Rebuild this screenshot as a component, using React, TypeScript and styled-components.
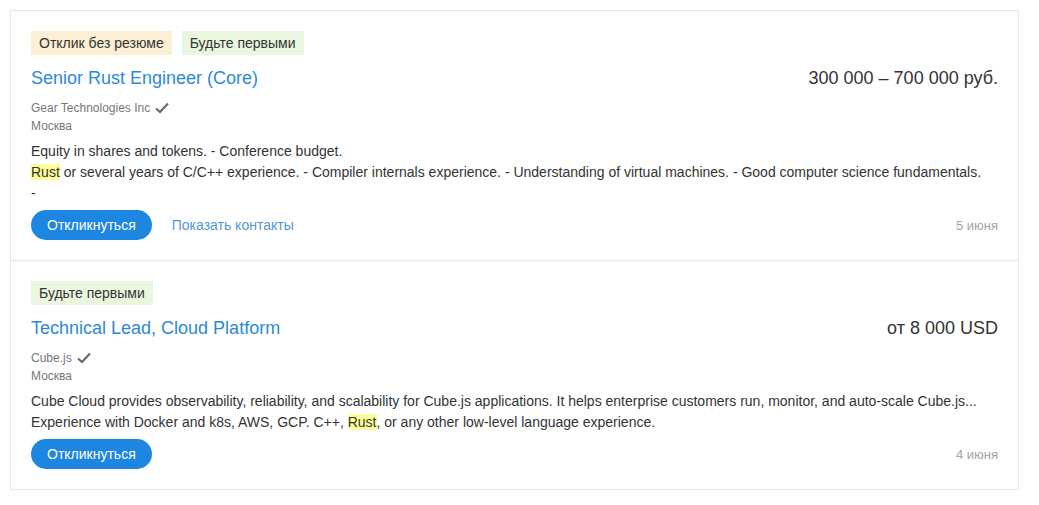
import styled, { createGlobalStyle } from 'styled-components';

const GlobalStyle = createGlobalStyle`
  body {
    margin: 0;
    background: #fff;
    font-family: 'Liberation Sans', Arial, sans-serif;
    color: #333;
  }
`;

const Page = styled.div`
  padding: 10px 20px 16px 10px;
`;

const List = styled.div`
  border: 1px solid #e6e6e6;
`;

const Card = styled.div`
  padding: 20px;
  & + & {
    border-top: 1px solid #e6e6e6;
  }
`;

const Tags = styled.div`
  display: flex;
  gap: 10px;
  margin-bottom: 11px;
`;

const Tag = styled.span<{ $tone: 'yellow' | 'green' }>`
  display: inline-block;
  height: 24px;
  line-height: 24px;
  padding: 0 8px;
  font-size: 14px;
  color: #333;
  background: ${(p) => (p.$tone === 'yellow' ? '#fbf0d4' : '#e9f7df')};
`;

const HeadRow = styled.div`
  display: flex;
  justify-content: space-between;
  align-items: center;
  height: 24px;
  margin-bottom: 9px;
`;

const Title = styled.a`
  font-size: 18px;
  color: #2b8ad8;
  text-decoration: none;
`;

const Salary = styled.div`
  font-size: 18px;
  color: #333;
`;

const Company = styled.div`
  display: flex;
  align-items: center;
  gap: 4px;
  font-size: 12px;
  line-height: 18px;
  color: #777;
`;

const City = styled.div`
  font-size: 12px;
  line-height: 18px;
  color: #777;
  margin-bottom: 6px;
`;

const Description = styled.div`
  font-size: 14px;
  line-height: 21px;
  color: #333;
  margin-bottom: 6px;
`;

const Mark = styled.mark`
  background: #ffff99;
  color: #333;
`;

const Footer = styled.div`
  display: flex;
  align-items: center;
  gap: 20px;
`;

const RespondButton = styled.button`
  height: 30px;
  padding: 0 16px;
  border: none;
  border-radius: 15px;
  background: #1d86e0;
  color: #fff;
  font-family: inherit;
  font-size: 14px;
  cursor: pointer;
`;

const ContactsLink = styled.a`
  font-size: 14px;
  color: #5398d3;
  text-decoration: none;
`;

const DateLabel = styled.span`
  margin-left: auto;
  font-size: 13px;
  color: #a3a3a3;
`;

const Check = () => (
  <svg width="16" height="14" viewBox="0 0 16 14" fill="none">
    <path d="M2 7.5 L6 11 L14 2.5" stroke="#666" strokeWidth="2" strokeLinejoin="miter" />
  </svg>
);

type Vacancy = {
  tags: { text: string; tone: 'yellow' | 'green' }[];
  title: string;
  salary: string;
  company: string;
  city: string;
  lines: React.ReactNode[];
  contacts: boolean;
  date: string;
};

const vacancies: Vacancy[] = [
  {
    tags: [
      { text: 'Отклик без резюме', tone: 'yellow' },
      { text: 'Будьте первыми', tone: 'green' },
    ],
    title: 'Senior Rust Engineer (Core)',
    salary: '300 000 – 700 000 руб.',
    company: 'Gear Technologies Inc',
    city: 'Москва',
    lines: [
      'Equity in shares and tokens. - Conference budget.',
      <>
        <Mark>Rust</Mark> or several years of C/C++ experience. - Compiler internals experience. -
        Understanding of virtual machines. - Good computer science fundamentals.
      </>,
      '-',
    ],
    contacts: true,
    date: '5 июня',
  },
  {
    tags: [{ text: 'Будьте первыми', tone: 'green' }],
    title: 'Technical Lead, Cloud Platform',
    salary: 'от 8 000 USD',
    company: 'Cube.js',
    city: 'Москва',
    lines: [
      'Cube Cloud provides observability, reliability, and scalability for Cube.js applications. It helps enterprise customers run, monitor, and auto-scale Cube.js...',
      <>
        Experience with Docker and k8s, AWS, GCP. C++, <Mark>Rust</Mark>, or any other low-level
        language experience.
      </>,
    ],
    contacts: false,
    date: '4 июня',
  },
];

export default function App() {
  return (
    <>
      <GlobalStyle />
      <Page>
        <List>
          {vacancies.map((v) => (
            <Card key={v.title}>
              <Tags>
                {v.tags.map((t) => (
                  <Tag key={t.text} $tone={t.tone}>
                    {t.text}
                  </Tag>
                ))}
              </Tags>
              <HeadRow>
                <Title href="#">{v.title}</Title>
                <Salary>{v.salary}</Salary>
              </HeadRow>
              <Company>
                {v.company}
                <Check />
              </Company>
              <City>{v.city}</City>
              <Description>
                {v.lines.map((l, i) => (
                  <div key={i}>{l}</div>
                ))}
              </Description>
              <Footer>
                <RespondButton>Откликнуться</RespondButton>
                {v.contacts && <ContactsLink href="#">Показать контакты</ContactsLink>}
                <DateLabel>{v.date}</DateLabel>
              </Footer>
            </Card>
          ))}
        </List>
      </Page>
    </>
  );
}
